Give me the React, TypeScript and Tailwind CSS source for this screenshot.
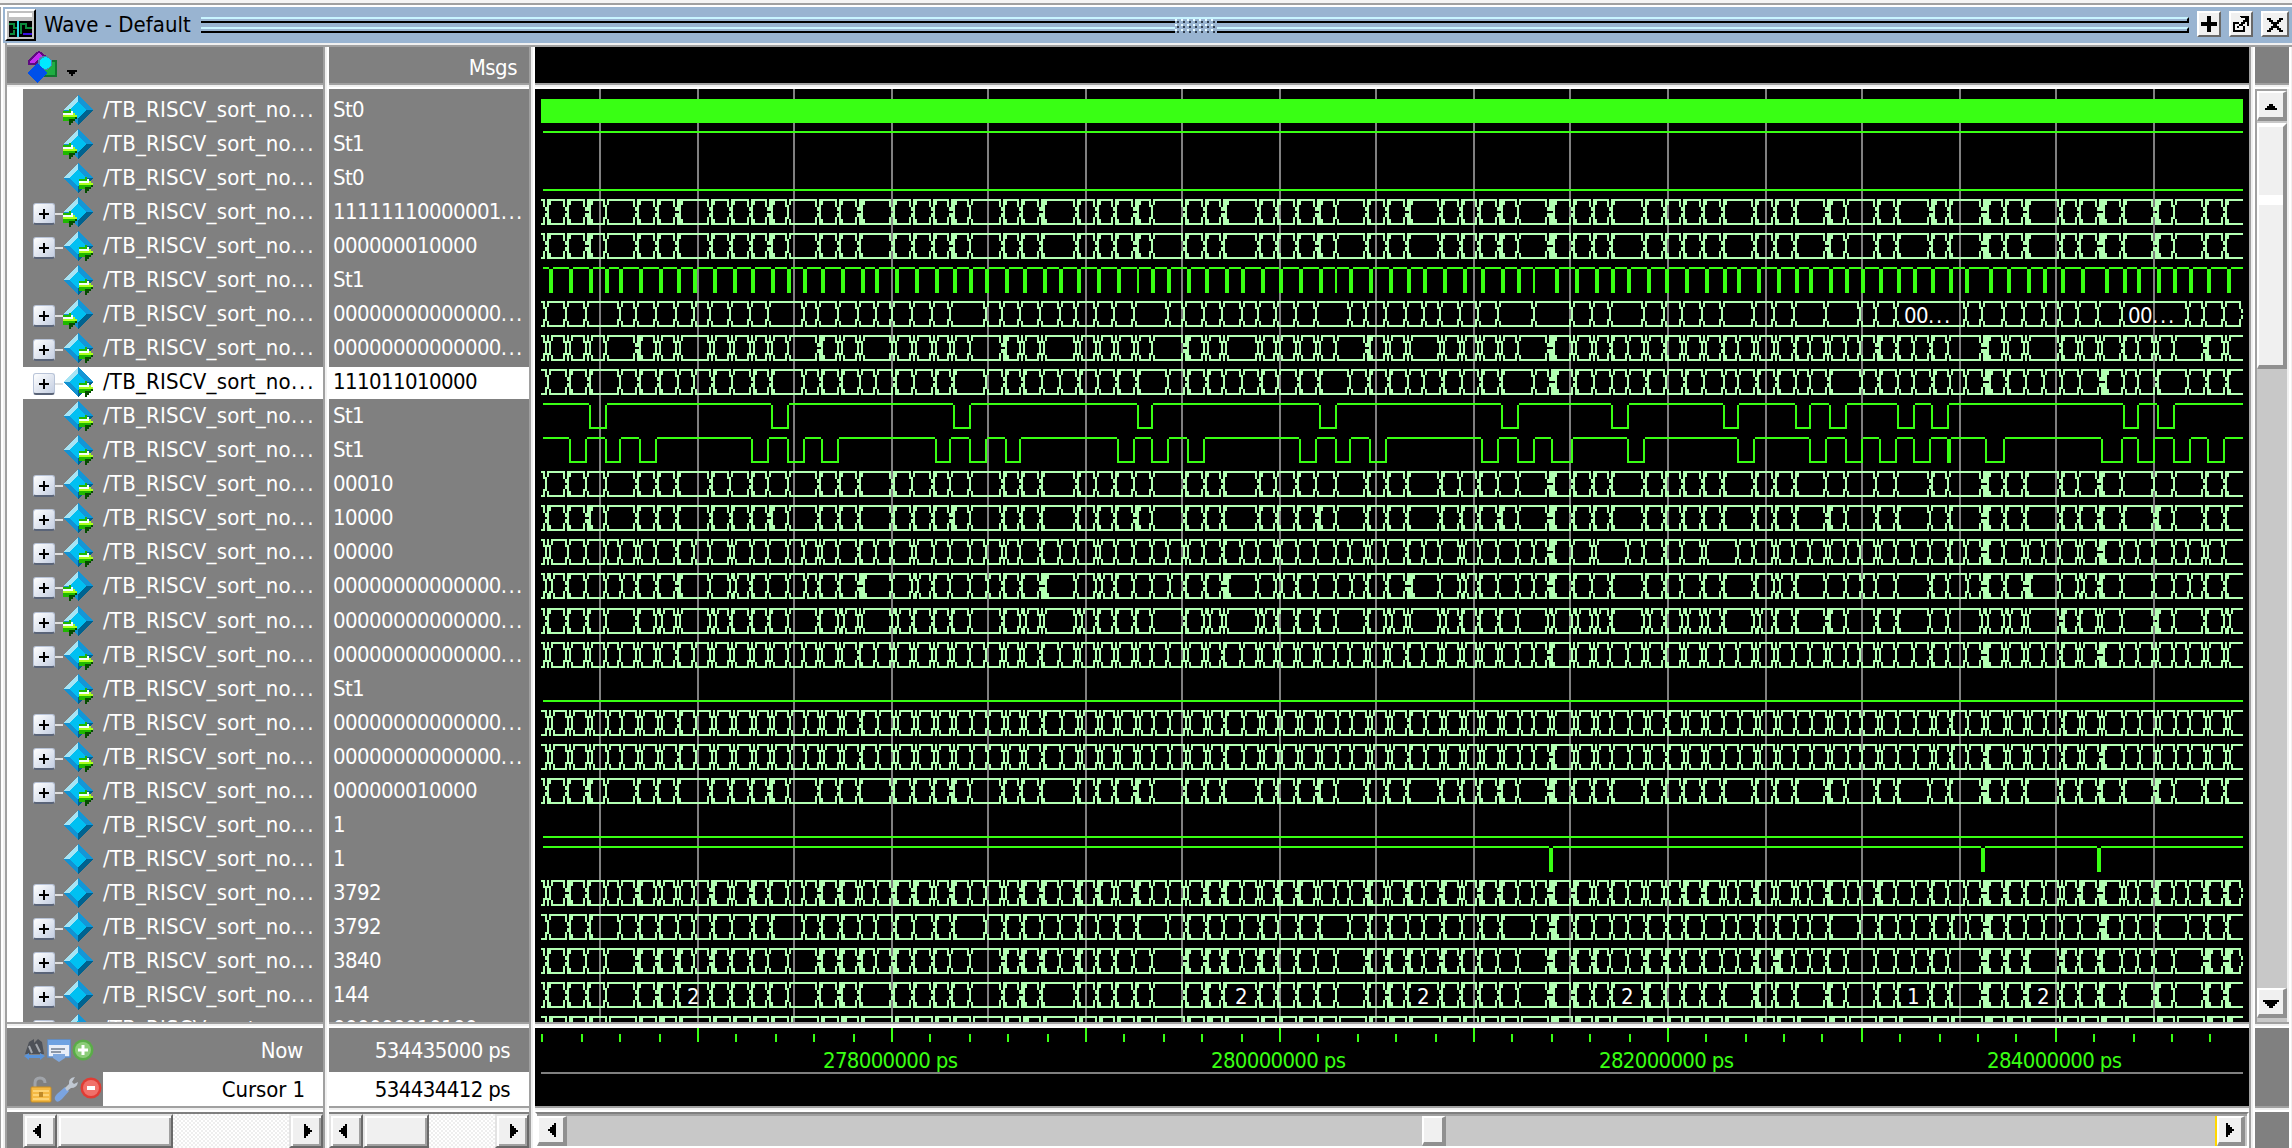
import React from "react";

const GREEN = "#39ff14";
const BUS = "#b3ffb3";

/* ---------- waveform data (columns of 2px, rows of 34px) ---------- */

const EDGES = [
  5, 15, 25, 35, 42, 50, 60, 70, 79, 87, 97, 107, 116, 126, 134, 141, 151, 161, 170, 178, 188, 198, 207, 217, 225, 233,
  242, 252, 262, 270, 280, 289, 299, 308, 316, 324, 334, 343, 353, 361, 370, 380, 390, 400, 407, 415, 425, 435, 444,
  452, 462, 471, 481, 491, 499, 506, 518, 528, 537, 546, 554, 564, 573, 583, 593, 601, 609, 619, 629, 637, 645, 655,
  662, 670, 680, 689, 697, 706, 715, 723, 734, 744, 754, 762, 771, 781, 793, 801, 809, 819, 826, 834, 844, 853,
];

const LAST = 854;

/* loop: ten cycles repeated five times, tail: the remaining cycles */
function codes(loop: string | string[], tail: string): string {
  const loops = typeof loop === "string" ? [loop, loop, loop, loop, loop] : loop;
  return loops[0].slice(7) + loops.join("") + tail.replace(/ /g, "");
}

type Change = { t: number; w: number };

/* s simple, p/q double, 1-3 burst; S, P, Q, a-c are the same one column later */
function changes(code: string): Change[] {
  const out: Change[] = [];
  code.split("").forEach((c, i) => {
    const e = EDGES[i];
    if (c === "s") out.push({ t: e, w: 0 });
    else if (c === "S") out.push({ t: e + 1, w: 0 });
    else if (c === "p") out.push({ t: e, w: 0 }, { t: e + 2, w: 0 });
    else if (c === "P") out.push({ t: e + 1, w: 0 }, { t: e + 3, w: 0 });
    else if (c === "q") out.push({ t: e, w: 0 }, { t: e + 3, w: 0 });
    else if (c >= "1" && c <= "3") out.push({ t: e, w: Number(c) });
    else if (c >= "a" && c <= "c") out.push({ t: e + 1, w: c.charCodeAt(0) - 96 });
  });
  return out.filter((c) => c.t + c.w < LAST);
}

function rect(x: number, y: number, w: number, h: number) {
  return `M${x * 2} ${y * 2}h${w * 2}v${h * 2}h${-w * 2}z`;
}

function busPath(code: string): string {
  let d = "";
  let start = 2;
  const span = (a: number, b: number) => {
    if (b > a) d += rect(a, 0, b - a, 1) + rect(a, 12, b - a, 1);
  };
  for (const { t, w } of changes(code)) {
    span(start + 1, t);
    d += rect(t - 1, 0, 1, 4) + rect(t - 1, 9, 1, 4);
    start = t + w;
    if (t + w + 1 >= LAST) {
      d += rect(t, 4, 1, 2) + rect(t, 7, 1, 2);
    } else if (w === 0) {
      d += rect(t, 3, 1, 7);
      d += rect(t + 1, 0, 1, 3) + rect(t + 1, 10, 1, 3);
    } else {
      d += rect(t + 1, 0, w + 1, 3) + rect(t + 1, 10, w + 1, 3);
      d += rect(t + 1, 3, w, 1) + rect(t + 1, 9, w, 1);
      d += rect(t, 4, w + 1, 2) + rect(t, 7, w + 1, 2);
      d += rect(t + w, 6, 1, 1);
    }
  }
  span(start + 1, LAST);
  return d;
}

function bitPath(lows: number[][]): string {
  let d = "";
  let x = 4;
  for (const [a, b] of lows) {
    d += rect(x, 0, a - x, 1) + rect(a, 1, 1, 12) + rect(b, 1, 1, 12) + rect(a, 12, b - a + 1, 1);
    x = b + 1;
  }
  return d + rect(x, 0, LAST - x, 1);
}

const CLOCK = [
  7, 17, 27, 35, 42, 52, 62, 71, 79, 89, 99, 108, 118, 126, 134, 143, 153, 163, 170, 180, 190, 200, 209, 217, 225, 235,
  244, 254, 262, 271, 281, 291, 301, 308, 316, 326, 335, 345, 353, 363, 372, 382, 392, 400, 407, 417, 427, 436, 444,
  454, 464, 473, 483, 491, 499, 510, 520, 530, 538, 546, 556, 565, 575, 585, 594, 601, 611, 621, 630, 637, 647, 655,
  663, 672, 681, 689, 698, 707, 715, 727, 736, 746, 754, 763, 773, 785, 794, 801, 811, 819, 827, 836, 846,
];
const NARROW = [301, 400, 499];

const WE = [
  [27, 35], [118, 126], [209, 217], [301, 308], [392, 400], [483, 491], [538, 546], [594, 601], [630, 637],
  [647, 655], [681, 689], [698, 706], [794, 801], [811, 819],
];
const RE = [
  [17, 25], [35, 42], [52, 60], [108, 116], [126, 134], [143, 151], [200, 207], [217, 225], [235, 242], [291, 299],
  [308, 316], [326, 334], [382, 390], [400, 407], [417, 425], [473, 481], [491, 499], [508, 518], [546, 554],
  [601, 609], [637, 645], [655, 663], [672, 680], [689, 697], [706, 707], [725, 734], [783, 793], [801, 809],
  [819, 827], [836, 844],
];

const ADDR_TAIL = "s.3111.111 11.111.2s. 11.s1.311. 1121.2s.11.";

type Wave = { kind: "solid" | "low" | "bit" | "bus"; d?: string };
const bus = (loop: string | string[], tail: string): Wave => ({ kind: "bus", d: busPath(codes(loop, tail)) });
const bit = (lows: number[][]): Wave => ({ kind: "bit", d: bitPath(lows) });

type Signal = { value: string; port: "in" | "out" | "none"; plus?: boolean; selected?: boolean; wave: Wave };

const ZEROS = "00000000000000...";

const SIGNALS: Signal[] = [
  { value: "St0", port: "in", wave: { kind: "solid" } },
  { value: "St1", port: "in", wave: bit([]) },
  { value: "St0", port: "out", wave: { kind: "low" } },
  { value: "11111110000001...", port: "in", plus: true, wave: bus("s.112.1112", "s.3111.111 11.111.2s. 11.21.312. 1131.2s.11.") },
  { value: "000000010000", port: "out", plus: true, wave: bus("s.111.1112", "s.3111.111 11.111.2s. 11.11.312. 1131.2s.11.") },
  { value: "St1", port: "out", wave: bit(CLOCK.map((c) => [c, NARROW.includes(c) ? c : c + 1])) },
  { value: ZEROS, port: "in", plus: true, wave: bus(".sssssssss", ".s.sss.sss ss.sss.s.s ss...sssss ssss...ssss") },
  { value: ZEROS, port: "out", plus: true, wave: bus("s.2pp.pppp", "s.3pp1sp1p p1spp1spss 21s1s.3pp. 1pp1sps.2p.") },
  { value: "111011010000", port: "out", plus: true, selected: true, wave: bus(".saaSsaSaa", ".scaSSsaSa SSsaaSsa.S aSsaSscaSs SScSsa.saa.") },
  { value: "St1", port: "out", wave: bit(WE) },
  { value: "St1", port: "out", wave: bit(RE) },
  { value: "00010", port: "out", plus: true, wave: bus("s.111.1s1s", "s.3111.111 11.111.ss. ss.1s.311. 1s2s.ss.11.") },
  { value: "10000", port: "out", plus: true, wave: bus("s.111.1112", ADDR_TAIL) },
  { value: "00000", port: "out", plus: true, wave: bus("ssps1sspSs", "ss3sp.ss1s p.sspsspss psss1s3sps sp3sssssps.") },
  {
    value: ZEROS, port: "in", plus: true,
    wave: bus(["sS112.sq1s", "sS113.sq1s", "sS113.sq1s", "sS113.sq1s", "sS113.sq1s"], "ss31s1.11s 11.1q1.ssS ss.1sS313. sq2s.ssS11."),
  },
  { value: ZEROS, port: "in", plus: true, wave: bus("s.1qp.q111", "s.qqq1.q1q q1.q11.2s. 11.ss.qqp. 21ps.2s.1q.") },
  { value: ZEROS, port: "out", plus: true, wave: bus("sspp1spppp", "ss2ppssp1p pssppsspss pss1ss3pps 1p3sspsspp.") },
  { value: "St1", port: "out", wave: { kind: "low" } },
  { value: ZEROS, port: "out", plus: true, wave: bus("SSPPaSPPPP", "SsPPPSSPaP PSSPPSSPSS PSSPaSPPPS aPPSSPSSPP.") },
  { value: ZEROS, port: "out", plus: true, wave: bus("SSPPaSPPPP", "SsbPPSSPaP PSSPPSSPSS PSSPaSbPPS aPbSSPSSPP.") },
  { value: "000000010000", port: "out", plus: true, wave: bus("s.111.1112", ADDR_TAIL) },
  { value: "1", port: "none", wave: { kind: "low" } },
  { value: "1", port: "none", wave: bit([[507, 508], [723, 724], [781, 782]]) },
  {
    value: "3792", port: "none", plus: true,
    wave: bus(["ss2qps2p21", "ss22ps22p2", "ssp22s22p2", "ssp22sp22p", "ss2p2s2p22"], "ss32p1spp2 2ps2pps2ss 2ss1ss321s p23ps2ss22s"),
  },
  { value: "3792", port: "none", plus: true, wave: bus(".saaSsaSaa", ".scaSSsaaa SSsaaSsa.s aSsaaScaSs SScssa.saa.") },
  { value: "3840", port: "none", plus: true, wave: bus("s.222s211s", "s.322ss221 1ss23ss1s. sss1s.322. 212ssss.33s") },
  { value: "144", port: "none", plus: true, wave: bus("s.121.1111", "s.3211.211 11.211.2s. 11.11.312. 1121.2s.22.") },
  { value: "000000010100", port: "none", plus: true, wave: bus("S.aba.aaaa", "S.cbaa.baa aa.baa.bS. aa.aa.cba. aaba.bS.bb.") },
];

const GRID = [32, 81, 129, 178, 226, 275, 323, 372, 420, 469, 517, 566, 615, 663, 712, 760, 809];

const BUS_LABELS = [
  { x: 1369, y: 234, t: "00", more: true },
  { x: 1593, y: 234, t: "00", more: true },
  { x: 152, y: 915, t: "2" },
  { x: 700, y: 915, t: "2" },
  { x: 882, y: 915, t: "2" },
  { x: 1086, y: 915, t: "2" },
  { x: 1372, y: 915, t: "1" },
  { x: 1502, y: 915, t: "2" },
];

const rowTop = (i: number) => 8 + 34 * i + (i >= 15 ? 1 : 0);

function Waves() {
  return (
    <svg width="1714" height="933" viewBox="0 0 1714 933" shapeRendering="crispEdges" className="block bg-black">
      {GRID.map((g) => (
        <rect key={g} x={g * 2} y="0" width="2" height="933" fill="#808080" />
      ))}
      {SIGNALS.map(({ wave }, i) => (
        <g key={i} transform={`translate(0 ${rowTop(i)})`}>
          {wave.kind === "solid" && <rect x="6" y="2" width="1702" height="24" fill={GREEN} />}
          {wave.kind === "low" && <rect x="8" y="24" width="1700" height="2" fill={GREEN} />}
          {wave.d && <path d={wave.d} fill={wave.kind === "bus" ? BUS : GREEN} />}
        </g>
      ))}
      {BUS_LABELS.map((l) => (
        <text key={l.x} x={l.x} y={l.y} fill="#fff" className="font-['DejaVu_Sans_Condensed','DejaVu_Sans',sans-serif] text-[22px] tracking-[-0.6px]">
          {l.t}
          {l.more && <tspan className="tracking-[1.7px]">...</tspan>}
        </text>
      ))}
    </svg>
  );
}

const TICKS = Array.from({ length: 44 }, (_, i) => ({ k: Math.floor(81.4 + 19.4 * (i - 4)), major: (i - 4) % 5 === 0 }));

function Timeline() {
  return (
    <svg width="1714" height="78" viewBox="0 0 1714 78" shapeRendering="crispEdges" className="block bg-black">
      {TICKS.map(({ k, major }) => (
        <rect key={k} x={k * 2} y={major ? 0 : 6} width="2" height={major ? 14 : 8} fill={GREEN} />
      ))}
      {[278, 280, 282, 284].map((m, i) => (
        <text key={m} x={288 + i * 388} y="40" fill={GREEN} textLength="135" className="font-['DejaVu_Sans_Condensed','DejaVu_Sans',sans-serif] text-[22px]">
          {m}000000 ps
        </text>
      ))}
      <rect x="6" y="44" width="1702" height="2" fill="#808080" />
    </svg>
  );
}

/* ---------- icons ---------- */

function Diamond({ port }: { port: Signal["port"] }) {
  return (
    <svg width="30" height="30" viewBox="0 0 15 15" shapeRendering="crispEdges" className="block">
      <path d="M7.5 0L0 7.5h4L7.5 4z" fill="#a5e4f5" />
      <path d="M7.5 0L15 7.5h-4L7.5 4z" fill="#1496d6" />
      <path d="M7.5 15L0 7.5h4L7.5 11z" fill="#1292d2" />
      <path d="M7.5 15L15 7.5h-4L7.5 11z" fill="#00628f" />
      <path d="M7.5 3.2L11.8 7.5 7.5 11.8 3.2 7.5z" fill="#00c0f2" />
      {port !== "none" && (
        <g transform={port === "in" ? "translate(0 0)" : "translate(8 0)"}>
          <path d="M0 8h3V7h1v1h1v1h1v1h1v2H6v1H5v1H4v1H3v-2H0z" fill="#1fb800" />
          <path d="M0 12h3v3h1v-1h1v-1h1v-1h1v-1H6v1z" fill="#064d00" />
          <path d="M0 10h5V9h1v1h1v1H0z" fill="#aaff1e" />
          <path d="M0 9h4V8h1v2H0z" fill="#f4ffff" />
        </g>
      )}
    </svg>
  );
}

function FilterIcon() {
  return (
    <svg width="52" height="34" viewBox="0 0 26 17" shapeRendering="crispEdges">
      <path d="M9 5.500h5.500v7.500H8z" fill="#1fae42" stroke="#12762f" strokeWidth="1" />
      <path d="M6 .8L.8 5.500v1.500h3l5-4z" fill="#c42df0" stroke="#5f0a80" strokeWidth="1" />
      <circle cx="9" cy="6.5" r="3.6" fill="#4a88a8" />
      <circle cx="9.2" cy="6.5" r="2.9" fill="#00e8ff" />
      <path d="M5 6.500l5 5L5 16.500 0 11.500z" fill="#0050ea" />
      <path d="M20 10h5v1h-1v1h-1v1h-1v-1h-1v-1h-1z" fill="#000" />
    </svg>
  );
}

function AppIcon() {
  return (
    <div className="h-[32px] w-[31px] border-t-2 border-r-2 border-b-2 border-l-2 border-t-white border-r-black border-b-black border-l-white bg-[#c0c0c0] p-[2px]">
      <svg width="23" height="24" viewBox="0 0 23 24" shapeRendering="crispEdges" className="block">
        <path d="M0 0h23v4H0z" fill="#fff" />
        <path d="M0 8h23v16H0z" fill="#000" />
        <path d="M0 11h5v4h3M1 21h4v-4M12 21v-10h5v4h6" stroke="#0c8a3c" strokeWidth="2" fill="none" />
        <path d="M9 8v16" stroke="#30d8e8" strokeWidth="2" />
        <path d="M14 21h9" stroke="#3a10e0" strokeWidth="2" />
      </svg>
    </div>
  );
}

function PlusBox() {
  return (
    <div className="relative h-[22px] w-[22px] rounded-[3px] border border-b-2 border-[#b9c4d8] border-b-[#5a6478] bg-linear-to-br from-white to-[#c5cfe2]">
      <span className="absolute top-[9px] left-[5px] h-[2px] w-[10px] bg-black" />
      <span className="absolute top-[5px] left-[9px] h-[10px] w-[2px] bg-black" />
    </div>
  );
}

function NowIcons() {
  return (
    <svg width="72" height="26" viewBox="0 0 72 26" className="block">
      <path d="M5 4l5-3v4l4-4 4 3 2 12H1z" fill="#4d5158" />
      <path d="M5 8l3 7M12 6l4 8" stroke="#a4a8ae" strokeWidth="2" />
      <path d="M0 18l5-3v2h11v-2l5 3-5 4v-2H5v2z" fill="#5a94da" />
      <rect x="24" y="2" width="22" height="17" fill="#e8eef8" stroke="#5b8fd0" strokeWidth="1.500" />
      <rect x="24" y="2" width="22" height="5" fill="#6ea2e2" />
      <path d="M27 11h14M27 14h10" stroke="#8d98a8" strokeWidth="2" />
      <path d="M29 16h12v4l-6 4-6-4z" fill="#7fa8de" />
      <circle cx="59" cy="12" r="10.500" fill="#5aac48" />
      <circle cx="59" cy="12" r="8" fill="#8ccc78" />
      <path d="M57.500 7h3v3.500h3.500v3h-3.500v3.500h-3v-3.500h-3.500v-3h3.500z" fill="#fff" />
    </svg>
  );
}

function CursorIcons() {
  return (
    <svg width="74" height="28" viewBox="0 0 74 28" className="block">
      <path d="M6 12V7q0-5 5-5t5 5" stroke="#a0a4aa" strokeWidth="3" fill="none" />
      <rect x="2" y="11" width="20" height="15" rx="1" fill="#f4b944" stroke="#c98e20" strokeWidth="1" />
      <path d="M4 15h16M4 19h16M4 23h16" stroke="#ffdc84" strokeWidth="1.500" />
      <rect x="10" y="16" width="4" height="5" fill="#c08a28" />
      <path d="M27 25q-3-3 1-7l8-7 4 4-7 8q-4 4-6 2z" fill="#7ba4e0" />
      <path d="M36 12l4-4q-1-6 6-7l-3 5 2 2 4-2q-1 6-7 6l-4 3z" fill="#c0c8d2" />
      <circle cx="62" cy="12" r="10.500" fill="#e03c34" />
      <circle cx="62" cy="12" r="8" fill="#f0716a" />
      <rect x="58" y="10" width="8" height="4" fill="#fff" />
    </svg>
  );
}

/* ---------- small parts ---------- */

type Dir = "left" | "right" | "up" | "down";

function Arrow({ dir }: { dir: Dir }) {
  const paths: Record<Dir, string> = {
    left: "M8 0v14h-2v-2h-2v-2h-2v-2h-2v-2h2v-2h2v-2h2v-2z",
    right: "M0 0v14h2v-2h2v-2h2v-2h2v-2h-2v-2h-2v-2h-2v-2z",
    up: "M4 0h4v2h2v2h2v2h-12v-2h2v-2h2z",
    down: "M-2 0h16v2h-2v2h-2v2h-2v2h-4v-2h-2v-2h-2v-2h-2z",
  };
  const wide = dir === "up" || dir === "down";
  return (
    <svg width={wide ? 12 : 8} height={wide ? 8 : 14} className="block overflow-visible" shapeRendering="crispEdges">
      <path d={paths[dir]} fill="#000" />
    </svg>
  );
}

const RAISED =
  "h-[34px] shrink-0 border-2 border-t-[#e3e3e3] border-r-[#696969] border-b-[#696969] border-l-[#e3e3e3] bg-[#f0f0f0] shadow-[inset_2px_2px_0_#fff,inset_-2px_-2px_0_#a0a0a0] ";

function MiniScroll({ thumb, pad }: { thumb: string; pad: string }) {
  return (
    <div className={"flex h-[36px] bg-[#808080] pt-[2px] " + pad}>
      <div className={RAISED + "flex w-[34px] items-center pl-[8px]"}>
        <Arrow dir="left" />
      </div>
      <div className={RAISED + thumb} />
      <div className="flex-1 bg-[repeating-conic-gradient(#ffffff_0_25%,#eeeeee_0_50%)] bg-[length:4px_4px]" />
      <div className={RAISED + "flex w-[34px] items-center pl-[13px]"}>
        <Arrow dir="right" />
      </div>
    </div>
  );
}

function HSash() {
  return <div className="h-[6px] shrink-0 border-t-2 border-b-2 border-t-[#a0a0a0] border-b-white bg-[#f0f0f0]" />;
}

function VSash() {
  return <div className="w-[6px] shrink-0 border-r-2 border-l-2 border-r-white border-l-[#a0a0a0] bg-[#f0f0f0]" />;
}

const FLAT =
  "border-t-2 border-l-2 border-r-4 border-b-4 border-t-white border-l-white border-r-[#909090] border-b-[#909090] bg-[#f0f0f0] flex items-center justify-center shrink-0 ";

function TitleButton({ kind, size }: { kind: "plus" | "pop" | "close"; size: string }) {
  return (
    <div className={"flex h-[26px] items-center justify-center border-2 border-t-white border-r-[#696969] border-b-[#696969] border-l-white bg-[#f0f0f0] " + size}>
      <svg width="16" height="16" viewBox="0 0 8 8" shapeRendering="crispEdges" className="block overflow-visible">
        {kind === "plus" && <path d="M3 0h2v3h3v2h-3v3h-2v-3h-3v-2h3z" fill="#000" />}
        {kind === "pop" && (
          <path
            fillRule="evenodd"
            d="M3 0h5v5h-1v-2h-1v1h-1v1h1v3h-6v-5h3v1h-2v3h4v-2h-2v-1h1v-1h1v-1h1v-1h-2zM2 5h1v1h-1z"
            fill="#000"
          />
        )}
        {kind === "close" && (
          <path d="M0 1h2v1h1v1h2v-1h1v-1h2v1h-1v1h-1v1h-1v1h1v1h1v1h1v1h-2v-1h-1v-1h-2v1h-1v1h-2v-1h1v-1h1v-1h1v-1h-1v-1h-1v-1h-1z" fill="#000" />
        )}
      </svg>
    </div>
  );
}

function TitleBar() {
  return (
    <div className="flex h-[36px] items-start bg-[#99b4d1] pt-[2px] pl-[2px]">
      <AppIcon />
      <span className="ml-[8px] w-[157px] text-[22px] leading-[31px] tracking-[0.05px] whitespace-nowrap text-black">Wave - Default</span>
      <div className="relative mt-[8px] flex flex-1 flex-col gap-[4px]">
        <div className="h-[6px] border-t-2 border-r-2 border-b-2 border-t-[#c8f4ff] border-r-black border-b-black" />
        <div className="h-[6px] border-t-2 border-r-2 border-b-2 border-t-[#c8f4ff] border-r-black border-b-black" />
        <div className="absolute top-[2px] left-[974px] h-[14px] w-[42px] bg-[#99b4d1] bg-[radial-gradient(circle_at_1px_1px,#e8fbff_1px,transparent_1.500px),radial-gradient(circle_at_3px_3px,#33404f_1px,transparent_1.500px)] bg-[length:6px_5px]" />
      </div>
      <div className="mt-[2px] ml-[8px] flex gap-[8px] pr-[3px]">
        <TitleButton kind="plus" size="w-[24px]" />
        <TitleButton kind="pop" size="w-[24px]" />
        <TitleButton kind="close" size="w-[28px]" />
      </div>
    </div>
  );
}

function NameRow({ s, i }: { s: Signal; i: number }) {
  return (
    <div className={"shrink-0 " + (i === 14 ? "h-[35px]" : "h-[34px]")}>
      <div className={"flex h-[32px] items-center pb-[2px] " + (s.selected ? "bg-white text-black" : "text-white")}>
        <div className="ml-[10px] flex w-[30px] items-center pt-[4px]">
          {s.plus && (
            <>
              <PlusBox />
              <span className="h-[2px] w-[8px] bg-[#e0e0e0]" />
            </>
          )}
        </div>
        <Diamond port={s.port} />
        <span className="ml-[10px] text-[22px] leading-[28px] tracking-[0.2px] whitespace-nowrap">
          /TB_RISCV_sort_no<span className="tracking-[1.9px]">...</span>
        </span>
      </div>
    </div>
  );
}

function ValueRow({ s, i }: { s: Signal; i: number }) {
  const more = s.value.endsWith("...");
  return (
    <div className={"shrink-0 " + (i === 14 ? "h-[35px]" : "h-[34px]")}>
      <div className={"flex h-[32px] items-center pb-[2px] pl-[4px] " + (s.selected ? "bg-white text-black" : "text-white")}>
        <span className="text-[22px] leading-[28px] tracking-[-0.6px] whitespace-nowrap">
          {more ? s.value.slice(0, -3) : s.value}
          {more && <span className="tracking-[1.3px]">...</span>}
        </span>
      </div>
    </div>
  );
}

export default function App() {
  return (
    <div className="flex h-[1148px] w-[2292px] flex-col overflow-hidden bg-[#f0f0f0] font-['DejaVu_Sans_Condensed','DejaVu_Sans',sans-serif]">
      <div className="h-[7px] shrink-0 border-t-[3px] border-b-2 border-t-[#f4f4f4] border-b-white bg-[#a0a0a0]" />
      <div className="flex shrink-0">
        <div className="w-[3px] border-r-2 border-l border-r-white border-l-[#a0a0a0]" />
        <div className="flex-1">
          <TitleBar />
        </div>
      </div>
      <div className="flex h-[1105px] shrink-0">
        <div className="flex w-[7px] shrink-0">
          <div className="w-px bg-[#a0a0a0]" />
          <div className="w-[2px] bg-white" />
          <div className="w-[2px] bg-[#f0f0f0]" />
          <div className="w-[2px] bg-[#a0a0a0]" />
        </div>
        <div className="flex min-w-0 flex-1 flex-col">
          <div className="h-[4px] shrink-0 border-b-2 border-b-[#a0a0a0] bg-[#f0f0f0]" />
          <div className="flex h-[1101px] shrink-0">
            {/* names */}
            <div className="flex w-[316px] shrink-0 flex-col">
              <div className="h-[36px] shrink-0 bg-[#808080] pt-[3px] pl-[20px]">
                <FilterIcon />
              </div>
              <HSash />
              <div className="flex h-[933px] shrink-0 bg-[#808080]">
                <div className="w-[16px] bg-white" />
                <div className="flex h-[933px] flex-1 flex-col overflow-hidden pt-[6px]">
                  {SIGNALS.map((s, i) => (
                    <NameRow key={i} s={s} i={i} />
                  ))}
                </div>
              </div>
              <HSash />
              <div className="flex h-[44px] shrink-0 items-start justify-between bg-[#808080] pt-[10px] pr-[20px] pl-[17px]">
                <NowIcons />
                <span className="text-[22px] leading-[26px] tracking-[-0.3px] text-white">Now</span>
              </div>
              <div className="flex h-[34px] shrink-0">
                <div className="w-[96px] bg-[#808080] pt-[4px] pl-[22px]">
                  <CursorIcons />
                </div>
                <div className="flex-1 bg-white pr-[18px] text-right text-[22px] leading-[36px] tracking-[-0.1px] text-black">Cursor 1</div>
              </div>
              <HSash />
              <MiniScroll thumb="w-[116px]" pad="pl-[16px]" />
            </div>
            <VSash />
            {/* values */}
            <div className="flex w-[200px] shrink-0 flex-col">
              <div className="h-[36px] shrink-0 bg-[#808080] pr-[12px] text-right text-[22px] leading-[42px] tracking-[-0.5px] text-white">Msgs</div>
              <HSash />
              <div className="flex h-[933px] shrink-0 flex-col overflow-hidden bg-[#808080] pt-[6px]">
                {SIGNALS.map((s, i) => (
                  <ValueRow key={i} s={s} i={i} />
                ))}
              </div>
              <HSash />
              <div className="h-[44px] shrink-0 bg-[#808080] pt-[10px] pr-[19px] text-right text-[22px] leading-[26px] tracking-[-0.6px] text-white">534435000 ps</div>
              <div className="h-[34px] shrink-0 bg-white pr-[19px] text-right text-[22px] leading-[36px] tracking-[-0.6px] text-black">534434412 ps</div>
              <HSash />
              <MiniScroll thumb="w-[66px]" pad="" />
            </div>
            <VSash />
            {/* waves */}
            <div className="flex w-[1714px] shrink-0 flex-col">
              <div className="h-[36px] shrink-0 bg-black" />
              <HSash />
              <Waves />
              <HSash />
              <Timeline />
              <HSash />
              <div className="flex h-[36px] shrink-0 border-t-2 border-r-2 border-b-2 border-l-2 border-t-[#808080] border-r-white border-b-white border-l-white bg-[#c8c8c8]">
                <div className="flex flex-1 border-t-2 border-[#a0a0a0]">
                  <div className={FLAT + "w-[30px] pl-[2px]"}>
                    <Arrow dir="left" />
                  </div>
                  <div className="w-[855px]" />
                  <div className={FLAT + "w-[24px]"} />
                  <div className="flex-1" />
                  <div className="w-[2px] bg-[#ffd700]" />
                  <div className={FLAT + "w-[28px]"}>
                    <Arrow dir="right" />
                  </div>
                  <div className="w-[2px]" />
                </div>
              </div>
            </div>
            <VSash />
            {/* vertical scroll */}
            <div className="flex w-[34px] shrink-0 flex-col">
              <div className="h-[36px] shrink-0 bg-[#808080]" />
              <HSash />
              <div className="flex h-[933px] w-[32px] shrink-0 flex-col border-t-2 border-l-2 border-[#a0a0a0] bg-[#c8c8c8]">
                <div className={FLAT + "h-[30px] w-[30px] pt-[6px]"}>
                  <Arrow dir="up" />
                </div>
                <div className="mt-[2px] h-[246px] w-[30px] shrink-0 border-t-4 border-r-4 border-b-4 border-l-2 border-t-white border-r-[#909090] border-b-[#909090] border-l-white bg-[#f0f0f0] pt-[68px]">
                  <div className="h-[10px] bg-white" />
                </div>
                <div className="flex-1" />
                <div className={FLAT + "h-[30px] w-[30px] pt-[4px]"}>
                  <Arrow dir="down" />
                </div>
                <div className="h-[4px]" />
              </div>
              <HSash />
              <div className="h-[78px] shrink-0 bg-[#808080]" />
              <HSash />
              <div className="h-[36px] shrink-0 bg-[#808080]" />
            </div>
            <div className="w-[2px] bg-white" />
            <div className="flex-1 bg-[#f0f0f0]" />
          </div>
        </div>
      </div>
    </div>
  );
}
